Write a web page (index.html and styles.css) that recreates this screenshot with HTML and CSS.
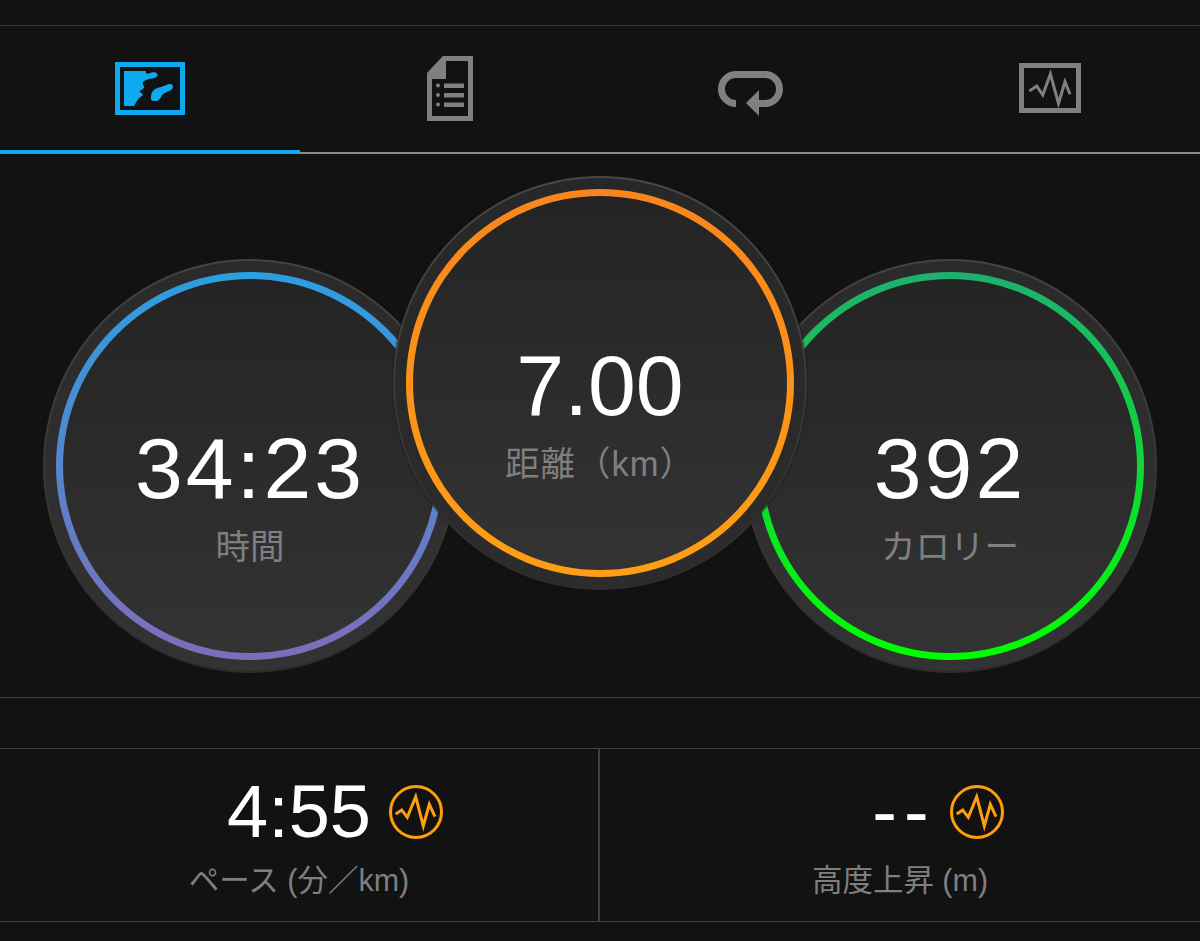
FILE: index.html
```html
<!DOCTYPE html>
<html lang="ja">
<head>
  <meta charset="UTF-8" />
  <meta name="viewport" content="width=device-width, initial-scale=1.0">
  <title>Activity</title>
  <link rel="stylesheet" href="styles.css">
</head>
<body>

  <div class="status-bar"></div>

  <nav class="tabs">
    <a class="tab active">
      <svg width="70" height="53" viewBox="0 0 70 53">
        <rect x="2.5" y="2.5" width="65" height="48" fill="none" stroke="currentColor" stroke-width="5" />
        <path fill="currentColor" d="M9 9H31C30 11 32 12 34 11.5C37 10 41 9.5 42.5 12C43 15 40 16 37 16.5C33 17 30 18 28 20C27 23 30 24 29 26C27 28 25 28 24.5 30C27 31 29 33 27 34C25 35 23 37 22 39L19 44H9Z" />
        <path fill="currentColor" d="M36 35C36 29 40 26 46 25C50 24 52 22 55 22C59 22 58.500 27 56 28C52 30 49 31 47 33C45 37 44 39 40 39C37 39 35.500 38 36 35Z" />
      </svg>
    </a>
    <a class="tab">
      <svg width="46" height="65" viewBox="0 0 46 65">
        <path fill="none" stroke="currentColor" stroke-width="5" d="M2.5 18L17 2.5H43.5V62.5H2.5Z" />
        <path fill="currentColor" d="M1 17L16 1H19V23H1Z" />
        <circle cx="11" cy="29.500" r="2" fill="currentColor" />
        <circle cx="11" cy="39" r="2" fill="currentColor" />
        <circle cx="11" cy="48.500" r="2" fill="currentColor" />
        <path fill="currentColor" d="M17 27.500H37V32H17ZM17 37H37V41.500H17ZM17 46.500H37V51H17Z" />
      </svg>
    </a>
    <a class="tab tab-loop">
      <svg width="65" height="45" viewBox="0 0 65 45">
        <path fill="none" stroke="currentColor" stroke-width="7" d="M18 32.500A14.500 14.500 0 0 1 18 3.500H47A14.500 14.500 0 0 1 47 32.500H36" />
        <path fill="currentColor" d="M28 32L41 19V45Z" />
      </svg>
    </a>
    <a class="tab tab-chart">
      <svg width="62" height="50" viewBox="0 0 62 50">
        <rect x="2.500" y="2.500" width="57" height="45" fill="none" stroke="currentColor" stroke-width="5" />
        <path fill="none" stroke="currentColor" stroke-width="3" d="M10.400 28L17.700 23L23.800 32L31.400 11L39.500 40.300L46 18.700L51 31.300" />
      </svg>
    </a>
  </nav>

  <section class="dials">
    <div class="dial dial-time">
      <div class="dial-ring">
        <div class="dial-face">
          <div class="dial-value">34:23</div>
          <div class="dial-label">時間</div>
        </div>
      </div>
    </div>
    <div class="dial dial-distance">
      <div class="dial-ring">
        <div class="dial-face">
          <div class="dial-value">7.00</div>
          <div class="dial-label">距離（km）</div>
        </div>
      </div>
    </div>
    <div class="dial dial-calories">
      <div class="dial-ring">
        <div class="dial-face">
          <div class="dial-value">392</div>
          <div class="dial-label">カロリー</div>
        </div>
      </div>
    </div>
  </section>

  <div class="spacer"></div>

  <section class="stats">
    <div class="stat">
      <div class="stat-row">
        <div class="stat-value">4:55</div>
        <svg class="pulse" width="54" height="54" viewBox="0 0 54 54">
          <circle cx="27" cy="27" r="25.500" fill="none" stroke="currentColor" stroke-width="3" />
          <path fill="none" stroke="currentColor" stroke-width="3" d="M6.700 29L12.700 25L18.300 32.300L26.700 11.700L34.300 41L40.300 19.300L46 31.700" />
        </svg>
      </div>
      <div class="stat-label">ペース (分／km)</div>
    </div>
    <div class="stat">
      <div class="stat-row">
        <div class="stat-value stat-empty">--</div>
        <svg class="pulse" width="54" height="54" viewBox="0 0 54 54">
          <circle cx="27" cy="27" r="25.500" fill="none" stroke="currentColor" stroke-width="3" />
          <path fill="none" stroke="currentColor" stroke-width="3" d="M6.700 29L12.700 25L18.300 32.300L26.700 11.700L34.300 41L40.300 19.300L46 31.700" />
        </svg>
      </div>
      <div class="stat-label">高度上昇 (m)</div>
    </div>
  </section>

</body>
</html>
```

FILE: styles.css
```css
html, body {
  margin: 0;
  padding: 0;
  background: #121212;
  overflow: hidden;
  color: white;
  font-family: 'Liberation Sans', 'Noto Sans CJK JP', sans-serif;
}

.status-bar {
  height: 25px;
  border-bottom: 1px solid #333;
}

.tabs {
  display: flex;
  height: 126px;
  border-bottom: 2px solid #8a8a8a;
}

.tab {
  flex: 1;
  display: flex;
  justify-content: center;
  align-items: center;
  padding-bottom: 3px;
  margin-bottom: -2px;
  color: #808080;
}

.tab.active {
  color: #0ea9ef;
  border-bottom: 4px solid #0ea9ef;
  padding-bottom: 0;
}

.tab-loop svg { margin-top: 9px; }
.tab-chart svg { margin-bottom: 2px; }

.dials {
  display: flex;
  justify-content: center;
  align-items: flex-start;
  height: 544px;
  padding-top: 22px;
  box-sizing: border-box;
  border-bottom: 1px solid #404040;
}

.dial {
  width: 414px;
  height: 414px;
  box-sizing: border-box;
  padding: 11px;
  border: 2px solid transparent;
  border-radius: 50%;
  background: linear-gradient(#2a2a2a, #333) padding-box, linear-gradient(#444, #2b2b2b) border-box;
}

.dial-time, .dial-calories {
  margin-top: 83px;
}

.dial-time { margin-right: -64px; }
.dial-calories { margin-left: -64px; }

.dial-distance {
  position: relative;
  z-index: 2;
  background: linear-gradient(#272727, #2c2c2c) padding-box, linear-gradient(#484848, #2c2c2c) border-box;
  box-shadow: 0 0 2px #111;
}

.dial-ring {
  height: 100%;
  box-sizing: border-box;
  padding: 7px;
  border-radius: 50%;
}

.dial-time .dial-ring { background: linear-gradient(#2b9fe0, #7f6cba); }
.dial-distance .dial-ring { background: linear-gradient(#f9861d, #ff9f14); }
.dial-calories .dial-ring { background: linear-gradient(#1eb06f, #00ff00); }

.dial-face {
  height: 100%;
  box-sizing: border-box;
  padding-top: 62px;
  border-radius: 50%;
  background: linear-gradient(#242424, #333);
  display: flex;
  flex-direction: column;
  justify-content: center;
  align-items: center;
}

.dial-value {
  font-size: 86px;
  line-height: 90px;
  letter-spacing: 3px;
}

.dial-distance .dial-value { letter-spacing: 0; }

.dial-label {
  margin-top: 9px;
  font-size: 34.5px;
  line-height: 50px;
  color: #7f7f7f;
}

.dial-distance .dial-label { letter-spacing: 1px; }

.spacer {
  height: 50px;
  border-bottom: 1px solid #404040;
}

.stats {
  display: flex;
  height: 172px;
  border-bottom: 1px solid #404040;
}

.stat {
  flex: 1;
  padding-top: 28px;
  box-sizing: border-box;
}

.stat:first-child {
  flex: 0 0 598px;
}

.stat + .stat {
  border-left: 2px solid #404040;
}

.stat-row {
  display: grid;
  grid-template-columns: 1fr auto 1fr;
  align-items: center;
  column-gap: 18px;
}

.stat-value {
  grid-column: 2;
  font-size: 74px;
  line-height: 70px;
}

.stat-empty {
  letter-spacing: 7px;
  padding-left: 4px;
  margin-right: -4px;
}

.pulse {
  color: #ff9f0a;
}

.stat-label {
  margin-top: 11px;
  font-size: 30.5px;
  line-height: 44px;
  color: #7f7f7f;
  text-align: center;
}
```
